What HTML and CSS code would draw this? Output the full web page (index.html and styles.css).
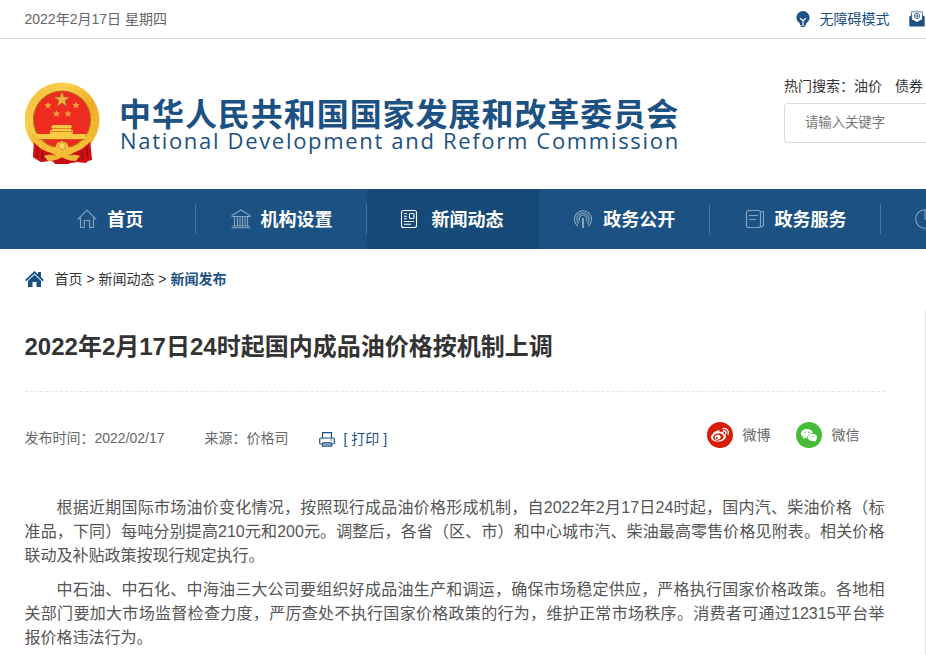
FILE: index.html
```html
<!DOCTYPE html>
<html lang="zh-CN">
<head>
<meta charset="utf-8">
<title>2022年2月17日24时起国内成品油价格按机制上调</title>
<link rel="stylesheet" href="styles.css">
</head>
<body>
<div class="topbar">
  <div class="wrap topbar-row">
    <span class="date">2022年2月17日 星期四</span>
    <a class="access">
      <svg width="14" height="16" viewBox="0 0 14 16"><path d="M7 0a6.600 6.600 0 0 1 6.600 6.500c0 2.300-1.200 3.800-2.500 5-.6.6-.9 1-1 1.500v1H4v-1c-.1-.6-.4-1-1-1.500C1.600 10.300.4 8.800.4 6.500A6.600 6.600 0 0 1 7 0z" fill="#1b5183"/><path d="M4 7.200L7 9.800l3-2.600M7 9.500V14" stroke="#fff" stroke-width="1.200" fill="none"/><path d="M4.500 14.500h5v.7l-1 .8h-3l-1-.8z" fill="#1b5183"/></svg>
      无障碍模式</a>
    <svg class="mail" width="16" height="16" viewBox="0 0 16 16"><path d="M2.500 9V.8h11V9" fill="#fff" stroke="#5d83a8"/><path d="M.3 5.500L2.500 4v4L8 11l5.500-3V4l2.200 1.500V15.500H.3z" fill="#1b5183"/><circle cx="8" cy="5" r="2.700" fill="none" stroke="#4d769f"/><circle cx="8" cy="5" r="1" fill="none" stroke="#1b5183"/></svg>
  </div>
</div>
<header class="wrap header">
  <svg class="emblem" width="76" height="82" viewBox="0 0 76 82">
    <defs><linearGradient id="gold" x1="0" y1="0" x2="1" y2="1"><stop offset="0" stop-color="#f6b92e"/><stop offset=".3" stop-color="#fbd052"/><stop offset=".6" stop-color="#efaf24"/><stop offset="1" stop-color="#f8c63b"/></linearGradient></defs>
    <path d="M11 56L9 75l8 5 10-1 5 2h16l5-1 9 1 4-4 1 1-2-22z" fill="#cf1015"/>
    <circle cx="38" cy="38" r="37.500" fill="url(#gold)"/>
    <circle cx="38" cy="38" r="32.500" fill="none" stroke="#d99318" stroke-width="1.500" stroke-dasharray="1.500 3" opacity=".3"/>
    <path d="M10 57L9 75l8 5c6-3 11-3 15-6L18 66zM66 57l2 21-9 2c-6-3-11-3-15-6l14-8z" fill="#cf1015"/>
    <path d="M14 63l-1 13M19 69l-1 9M24 72l-4 7M62 63l2 13M57 69l2 9M52 72l4 7" stroke="#870b0d" fill="none"/>
    <circle cx="38" cy="37.500" r="28.500" fill="#ed2b20" stroke="#b66b16" stroke-width="1.200"/>
    <path d="M38 9.500l1.900 5.500 5.900.1-4.700 3.500 1.700 5.600-4.800-3.300-4.800 3.300 1.700-5.600-4.700-3.500 5.900-.1z" fill="#efb540" stroke="#a95f19" stroke-width=".6"/>
    <g fill="#eaa534"><path id="star" d="M24 19.500l1 2.600 2.700.1-2.100 1.700.7 2.600-2.300-1.500-2.300 1.500.7-2.600-2.100-1.700 2.700-.1z"/><use href="#star" x="28"/><use href="#star" x="8.500" y="8.500"/><use href="#star" x="20" y="8.500"/></g>
    <path d="M29 43h18l1 2-1 1v2h2v4h13l-1 5H14l-3-5h15v-4h2v-2l-1-1z" fill="#fbc944"/>
    <path d="M28 46.500h20M26 49.500h23M14 57.500h47" stroke="#c96619" stroke-width=".7"/>
    <path d="M10 52c6 8 13 13 21 14l2-5 5-2 5 2 2 5c9-1 16-6 21-14l2 5c-6 9-14 13-23 14l-5 3h-5l-5-3C21 70 13 66 8 57z" fill="#f7bd38"/>
    <circle cx="38" cy="64" r="3.500" fill="#fdd763" stroke="#d98f1c"/>
    <path d="M20 74c7-3 11 0 18 1 7-1 11-4 18-1l-4 5c-6 0-10-1-14-4-4 3-8 4-14 4z" fill="#f0b637"/>
    <path d="M29 79l9-3 9 3-2 3H31z" fill="#c90d14"/>
  </svg>
  <div class="brand">
    <div class="brand-cn">中华人民共和国国家发展和改革委员会</div>
    <div class="brand-en">National Development and Reform Commission</div>
  </div>
  <div class="search">
    <div class="hot"><span>热门搜索：油价</span><span>债券</span></div>
    <div class="box">请输入关键字</div>
  </div>
</header>
<nav class="nav">
  <div class="wrap nav-row">
    <a class="item"><svg width="20" height="20" viewBox="0 0 20 20"><path d="M.7 10.500L10 1.200l9.300 9.300M3.500 9v9.500h3.800v-7h5.400v7h3.800V9"/></svg><span>首页</span></a>
    <a class="item"><svg width="20" height="20" viewBox="0 0 20 20"><path d="M1 6.500L10 1l9 5.500v1H1zM3.500 8v9M6.500 8v9M9 8v9M11.500 8v9M14 8v9M16.500 8v9M1.500 17h17M.5 18.800h19"/></svg><span>机构设置</span></a>
    <a class="item active"><svg width="20" height="20" viewBox="0 0 20 20"><rect x="2.500" y="1.500" width="15" height="17" rx="2"/><rect x="10.500" y="4.500" width="4.500" height="5" rx="1"/><path d="M5 4.500h3M5 7.200h3M5 9.800h3M5 12.500h10M5 15.200h7"/></svg><span>新闻动态</span></a>
    <a class="item"><svg width="20" height="20" viewBox="0 0 20 20"><path d="M9.500 9v10M10.500 9v10M5 17.300a8.600 8.600 0 1 1 10 0M5.800 14.500a6.100 6.100 0 1 1 8.400 0M7 12a3.700 3.700 0 1 1 6 0"/></svg><span>政务公开</span></a>
    <a class="item"><svg width="20" height="20" viewBox="0 0 20 20"><rect x="1.500" y="1.500" width="14" height="17" rx="2"/><path d="M4 6.500h9M4 10.500h7M16 2.500h2.500v14l-2.500 2"/></svg><span>政务服务</span></a>
    <a class="item edge"><svg width="20" height="20" viewBox="0 0 20 20"><circle cx="10" cy="10" r="9.300"/><path d="M10 1v9h5"/></svg></a>
  </div>
</nav>
<main class="wrap main">
  <div class="crumbs">
    <svg width="19" height="16" viewBox="0 0 19 16"><path d="M9.500 0L13 3.300V1h3v5L19 9l-1.300 1.200L9.500 2.500 1.300 10.200 0 9z" fill="#1b5183"/><path d="M3 9.700l6.500-6 6.500 6V16h-4.500v-5h-4v5H3z" fill="#1b5183"/></svg>
    <span>首页 &gt; 新闻动态 &gt; <b>新闻发布</b></span>
  </div>
  <article class="article">
    <h1>2022年2月17日24时起国内成品油价格按机制上调</h1>
    <div class="meta">
      <span class="time">发布时间：2022/02/17</span>
      <span class="source">来源：价格司</span>
      <a class="print"><svg width="16" height="15" viewBox="0 0 16 15"><path d="M3.500 6V.7h9V6M3 12H1.800Q.7 12 .7 10.800V7.200Q.7 6 1.900 6h12.200q1.200 0 1.200 1.200v3.600q0 1.200-1.100 1.200H13M11.500 8h1.500" fill="none" stroke="#1b5183" stroke-width="1.200"/><path d="M3.700 10.700h8.600l.7 3.500H3z" fill="#86a3bf" stroke="#1b5183"/></svg>[ 打印 ]</a>
      <a class="share weibo"><svg width="26" height="26" viewBox="0 0 26 26"><circle cx="13" cy="13" r="13" fill="#d81e06"/><path d="M10.500 8.500c1.500-.6 2.500 0 2.100 1.700 2.600-.9 4.500-.5 4 1.600 1.700.6 2.400 1.500 2.400 2.800 0 2.900-3.600 5-7.700 5S4 17.700 4 15.200c0-2.500 3.500-5.800 6.500-6.700z" fill="#fff"/><ellipse cx="11.300" cy="15" rx="5.300" ry="3.600" transform="rotate(-8 11.300 15)" fill="#d81e06"/><ellipse cx="10.700" cy="15.300" rx="3" ry="2.400" transform="rotate(-20 10.700 15.300)" fill="#fff"/><circle cx="9.900" cy="15.900" r="1" fill="#d81e06"/><path d="M16.200 6.700c3.500-.7 6 2 4.900 5.400M16.500 9c1.700-.3 2.800.9 2.300 2.500" stroke="#fff" stroke-width="1.400" fill="none" stroke-linecap="round"/></svg>微博</a>
      <a class="share"><svg width="26" height="26" viewBox="0 0 26 26"><circle cx="13" cy="13" r="13" fill="#46bb36"/><path d="M11 7c3.100 0 5.500 1.800 5.800 4.200-3.200 0-5.700 2-5.600 5.100l-2.300-.3-2 1 .5-1.800C6 14.200 5 13 5 11.500 5 9 7.700 7 11 7z" fill="#fff"/><path d="M16.500 11.800c2.700 0 4.700 1.700 4.700 3.800 0 1.200-.7 2.100-1.600 2.800l.4 1.400-1.700-.8c-3.500.8-6.500-.8-6.500-3.400 0-2.100 2-3.800 4.700-3.800z" fill="#fff"/><g fill="#46bb36"><circle cx="9" cy="10.300" r=".8"/><circle cx="13" cy="10.300" r=".8"/><circle cx="15" cy="14.600" r=".7"/><circle cx="18" cy="14.600" r=".7"/></g></svg>微信</a>
    </div>
    <div class="content">
      <p><span class="line first">根据近期国际市场油价变化情况，按照现行成品油价格形成机制，自2022年2月17日24时起，国内汽、柴油价格（标</span><span class="line">准品，下同）每吨分别提高210元和200元。调整后，各省（区、市）和中心城市汽、柴油最高零售价格见附表。相关价格</span><span class="line last">联动及补贴政策按现行规定执行。</span></p>
      <p><span class="line first">中石油、中石化、中海油三大公司要组织好成品油生产和调运，确保市场稳定供应，严格执行国家价格政策。各地相</span><span class="line">关部门要加大市场监督检查力度，严厉查处不执行国家价格政策的行为，维护正常市场秩序。消费者可通过12315平台举</span><span class="line last">报价格违法行为。</span></p>
    </div>
  </article>
</main>
</body>
</html>
```
FILE: styles.css
```css
* { box-sizing: border-box; }
html, body { height: 655px; overflow: hidden; }
body { margin: 0; background: #fff; color: #333; font: 14px/20px "Liberation Sans", "Noto Sans CJK SC", sans-serif; }
svg { display: block; flex: none; }
.wrap { margin-left: 24.5px; }
.topbar { height: 39px; border-bottom: 1px solid #d0d9e6; }
.topbar-row { display: flex; align-items: center; height: 38px; }
.date { flex: none; width: 771px; color: #666; }
.access { display: flex; flex: none; align-items: center; gap: 10px; width: 113px; color: #1b5183; }
.header { display: flex; height: 150px; overflow: hidden; }
.emblem { margin: 43px 0 0 -0.500px; }
.brand { flex: none; width: 665px; margin: 58px 0 0 19px; color: #1b5183; white-space: nowrap; }
.brand-cn { height: 32px; font-size: 32px; line-height: 36px; font-weight: 700; letter-spacing: 0.950px; }
.brand-en { margin-top: -1px; padding-left: 1px; font: 22px/24px "Open Sans", sans-serif; letter-spacing: 1.680px; }
.search { flex: 1; min-width: 0; padding-top: 37px; white-space: nowrap; }
.hot { display: flex; gap: 13px; height: 27px; }
.box { height: 40px; padding-left: 20px; border: 1px solid #dcdcdc; border-right: 0; border-radius: 4px 0 0 4px; color: #777; font-size: 13.330px; line-height: 37px; }
.nav { height: 60px; background: #1c5283; overflow: hidden; }
.nav-row { display: flex; }
.item { position: relative; display: flex; flex: none; align-items: center; justify-content: center; gap: 10px; width: 171.360px; height: 60px; color: #fff; font-size: 18px; font-weight: 700; white-space: nowrap; }
.item span { padding-top: 1px; }
.item svg { fill: none; stroke: #88a5c0; stroke-width: 1.100; }
.item::after { content: ""; position: absolute; right: 0; top: 15px; width: 1px; height: 30px; background: #49759c; }
.active { gap: 12px; padding-right: 3px; background: #164a78; }
.active svg { stroke: #fff; }
.active::after { display: none; }
.edge { flex: 1; min-width: 0; justify-content: flex-start; padding-left: 34px; overflow: hidden; }
.edge::after { display: none; }
.main { height: 406px; }
.crumbs { display: flex; align-items: center; gap: 11px; height: 60px; font-size: 14px; }
.crumbs b { color: #1b5183; }
.article { width: 901px; height: 360px; padding-right: 40px; border-right: 1px solid #e8e8e8; }
h1 { height: 83px; margin: 0; padding-top: 20px; border-bottom: 1px dashed #e5e5e5; font-size: 24px; line-height: 36px; }
.meta { display: flex; align-items: center; height: 92px; color: #666; }
.time { width: 180px; }
.source { width: 114px; }
.print { display: flex; align-items: center; gap: 9px; width: 388px; padding-top: 2px; color: #1b5183; }
.share { display: flex; align-items: center; gap: 10px; padding-bottom: 6px; }
.weibo { width: 89px; }
.content { padding-top: 12px; color: #555; font-size: 16px; line-height: 24px; }
.content p { margin: 0 0 10px; }
.line { display: block; height: 24px; white-space: nowrap; text-align-last: justify; }
.first { padding-left: 32px; }
.last { text-align-last: left; }
```
